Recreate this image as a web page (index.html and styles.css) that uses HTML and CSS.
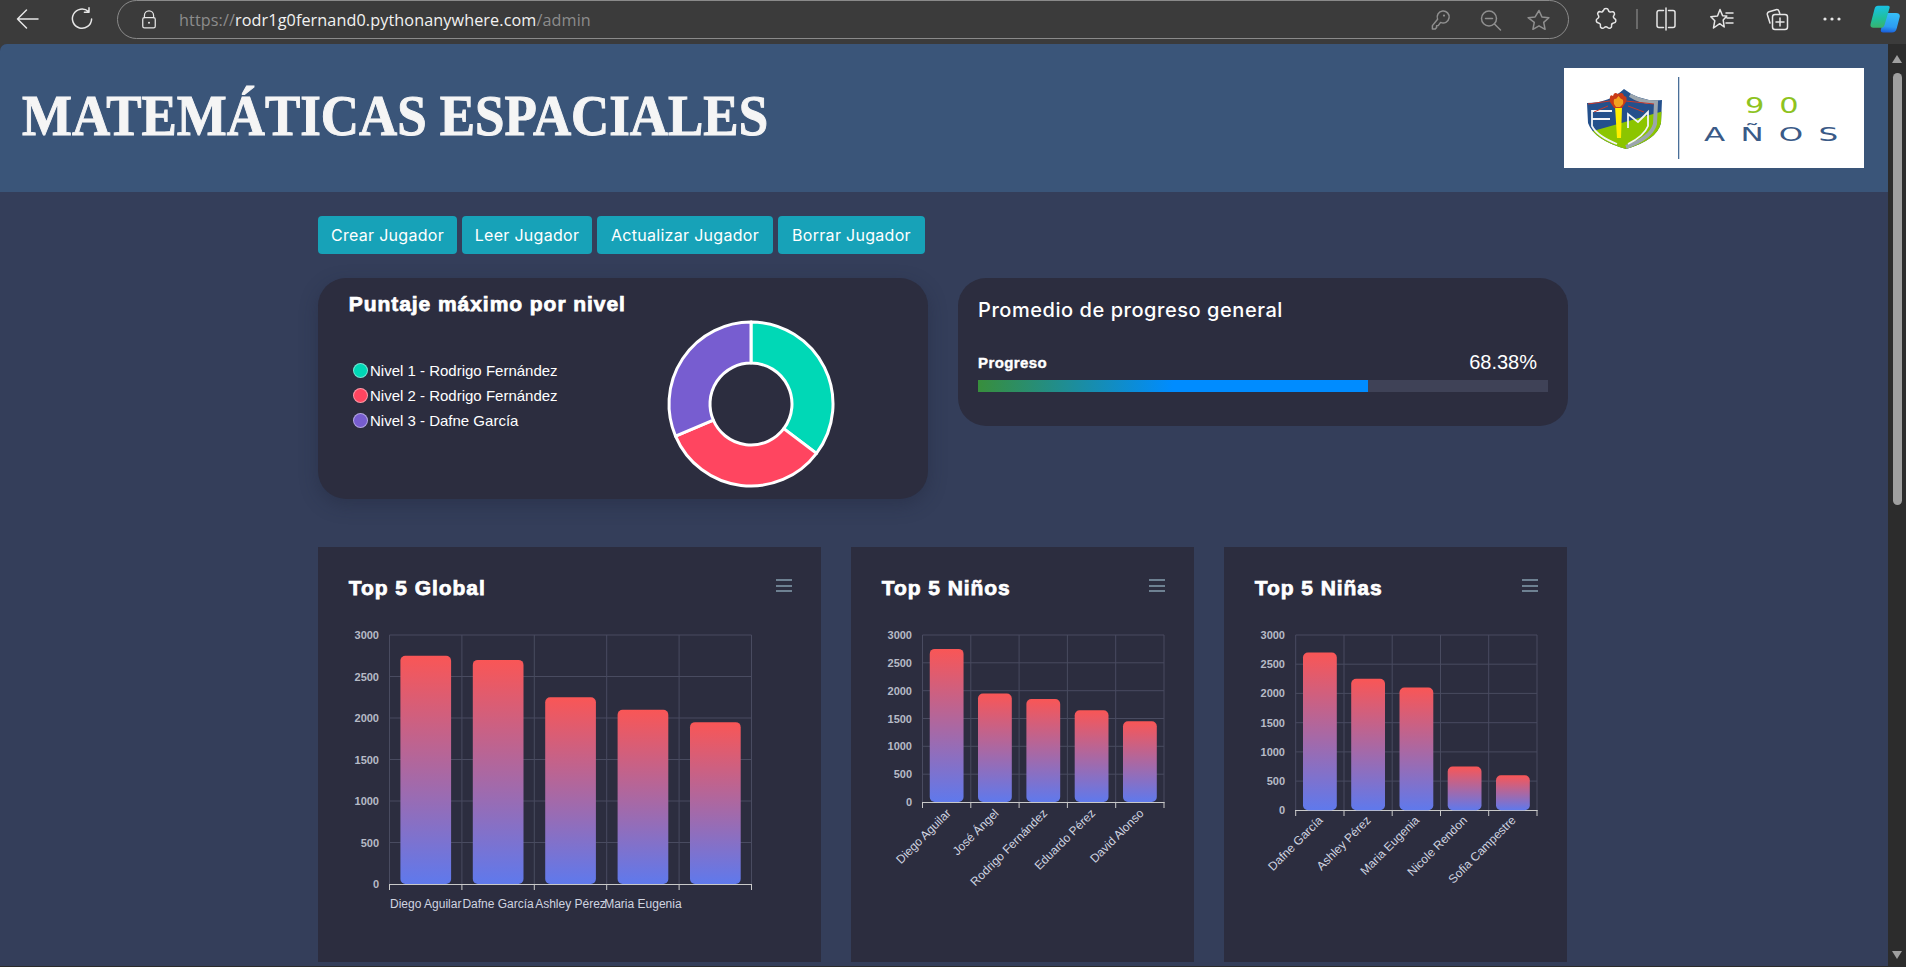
FILE: index.html
```html
<!DOCTYPE html>
<html lang="es">
<head>
<meta charset="utf-8">
<title>Matemáticas Espaciales</title>
<link rel="stylesheet" href="styles.css">
</head>
<body>
<div class="toolbar">
  <svg class="tb-icon back" viewBox="0 0 24 24"><path class="ic" d="M23 12H2.500M11.500 3 2.500 12l9 9"/></svg>
  <svg class="tb-icon reload" viewBox="0 0 24 24"><path class="ic" d="M18.500 4.600A9.600 9.600 0 1 0 21.600 12M19 .8v4.400h-4.600"/></svg>
  <div class="pill">
    <svg class="tb-icon lock" viewBox="0 0 24 24"><path class="ic" d="M6.500 9V6.500a5.500 5.500 0 0 1 11 0V9"/><rect class="ic" x="4.500" y="9" width="15" height="12.500" rx="2"/><circle class="dot" cx="12" cy="15.200" r="1.200"/></svg>
    <div class="url"><span class="url-dim">https://</span>rodr1g0fernand0.pythonanywhere.com<span class="url-dim">/admin</span></div>
    <div class="pill-actions">
      <svg class="tb-icon" viewBox="0 0 24 24"><path class="ic-dim" d="M9.600 11.200 4.400 17.600v3.400h2.800l1.400-1.600v-1.600l1.600-.2 2.400-3.200a6 6 0 1 0-3-3.200Z"/><circle class="dot-dim" cx="16" cy="7.600" r="1.100"/></svg>
      <svg class="tb-icon" viewBox="0 0 24 24"><circle class="ic-dim" cx="11" cy="10.500" r="7.500"/><path class="ic-dim" d="M7.500 10.500h7M16.500 16l6 6"/></svg>
      <svg class="tb-icon" viewBox="0 0 24 24"><path class="ic-dim" d="m12 2.500 2.900 6.400 7 .8-5.200 4.700 1.400 6.900-6.100-3.500-6.100 3.500 1.400-6.900L1.100 9.700l7-.8Z"/></svg>
    </div>
  </div>
  <svg class="tb-icon ext" viewBox="0 0 24 24"><path class="ic" d="M9.500 3.500a2.600 2.600 0 0 1 5 0c.3 1.400 1.600 1.900 2.800 1.400 2.600-1 4.200 1.600 2.600 3.600-.9 1-.6 2.400.6 3 2.300 1.100 1.600 4.300-.9 4.600-1.400.2-2.200 1.200-2 2.600.4 2.400-2.400 3.400-4 1.800-1-1-2.300-1-3.300 0-1.700 1.600-4.400.4-3.900-1.900.3-1.300-.5-2.400-1.900-2.600-2.500-.3-3.100-3.500-.8-4.600 1.200-.6 1.400-1.900.6-3-1.600-2 .1-4.500 2.500-3.500 1.200.5 2 0 2.300-1.400Z"/></svg>
  <div class="tb-sep"></div>
  <svg class="tb-icon split" viewBox="0 0 24 24"><path class="ic" d="M12 1v22M9.500 3.500H5a2 2 0 0 0-2 2v13a2 2 0 0 0 2 2h4.500M14.500 3.500H19a2 2 0 0 1 2 2v13a2 2 0 0 1-2 2h-4.500"/></svg>
  <svg class="tb-icon fav" viewBox="0 0 24 24"><path class="ic" d="m10 2.500 2.600 6.200 4.200.4-3.600 4 1 6.900-4.500-3.300-6.200 4.300 1.300-7.300L.8 9.700l6.700-.8ZM16 6h7M17 11h6M16 16h7"/></svg>
  <svg class="tb-icon coll" viewBox="0 0 24 24"><path class="ic" d="M5 16 2.400 7.800a2.500 2.500 0 0 1 1.700-3.100L11 2.700a2.500 2.500 0 0 1 3 1.500l.8 2.300"/><rect class="ic" x="7.500" y="7.500" width="15" height="15" rx="2.500"/><path class="ic" d="M15 11v8M11 15h8"/></svg>
  <svg class="tb-icon more" viewBox="0 0 24 24"><circle class="dot" cx="5" cy="12" r="1.600"/><circle class="dot" cx="12" cy="12" r="1.600"/><circle class="dot" cx="19" cy="12" r="1.600"/></svg>
  <svg class="copilot" viewBox="0 0 30 28">
    <defs>
      <linearGradient id="cpA" x1="0.3" y1="0" x2="0.4" y2="1"><stop offset="0" stop-color="#19c1e8"/><stop offset="0.6" stop-color="#1fbf9b"/><stop offset="1" stop-color="#3ab26c"/></linearGradient>
      <linearGradient id="cpB" x1="0.5" y1="0" x2="0.4" y2="1"><stop offset="0" stop-color="#36bdf7"/><stop offset="0.7" stop-color="#2c9cf0"/><stop offset="1" stop-color="#1a5fdc"/></linearGradient>
    </defs>
    <path fill="url(#cpB)" d="M17 8h9c3 0 4.300 1.700 3.700 4l-3 11.500c-.6 2.700-2.300 4-4.700 4h-9c-2 0-2.500-1.300-2-3.200l3.500-13.300c.5-2 1.500-3 2.500-3Z"/>
    <path fill="url(#cpA)" d="M8 .8h10c1.600 0 2 .9 1.500 2.500L14.500 20c-.6 2-2 2.800-3.800 2.800H3.500C1 22.800 0 21 .6 19L4.500 4C5 2 6.300.8 8 .8Z"/>
  </svg>
</div>

<div class="shell">
  <div class="page">
    <header class="site-header">
      <h1 class="site-title">MATEMÁTICAS ESPACIALES</h1>
      <svg class="logo" viewBox="0 0 300 100">
        <defs>
          <clipPath id="shieldClip"><path d="M23 35Q45 35 60 21Q76 34 98 32L97 55Q93 72 62 81Q30 72 24 55Z"/></clipPath>
        </defs>
        <rect width="300" height="100" fill="#fff"/>
        <g clip-path="url(#shieldClip)">
          <rect x="20" y="18" width="82" height="66" fill="#24508c"/>
          <path fill="#8cc500" d="M20 65.500 100 43V84H20Z"/>
          <path fill="none" stroke="#9ba5ad" stroke-width="4" d="M66 27Q78 35 92 34L91 56Q87 70 62 79"/>
        </g>
        <path fill="none" stroke="#f2f4f7" stroke-width="1.800" d="M48 43H28V58Q33 68 53 76M28 51H46M64 60V46L74 54 84 44V58Q80 68 64 76"/>
        <path fill="none" stroke="#c8392b" stroke-width="1" d="M24 36 46 33M44 38 30 44M62 33 90 36M64 38 80 44"/>
        <path fill="#ffee00" d="M51 38H58L57 70H53Z"/>
        <path fill="#c93a17" d="M46 34Q45 25 49 28 50 23 54 26 59 23 60 28 64 28 62 34L58 40H50Z"/>
        <path fill="#f4a21f" d="M50 36Q49 30 52 31L54.500 28 57 31Q60 31 59 36L56 39H52Z"/>
        <rect x="114" y="9" width="1.300" height="82" fill="#4a6f99"/>
        <text class="logo-90" transform="translate(181 45) scale(1.450 1)" textLength="37">90</text>
        <text class="logo-anos" transform="translate(140 73) scale(1.550 1)" textLength="86.500">AÑOS</text>
      </svg>
    </header>

    <main class="content">
      <nav class="actions">
        <a class="btn">Crear Jugador</a>
        <a class="btn">Leer Jugador</a>
        <a class="btn">Actualizar Jugador</a>
        <a class="btn">Borrar Jugador</a>
      </nav>

      <section class="summary">
        <article class="panel panel-donut">
          <h2 class="heavy-title">Puntaje máximo por nivel</h2>
          <div class="donut-row">
            <ul class="legend">
              <li class="legend-item"><span class="swatch swatch-a"></span>Nivel 1 - Rodrigo Fernández</li>
              <li class="legend-item"><span class="swatch swatch-b"></span>Nivel 2 - Rodrigo Fernández</li>
              <li class="legend-item"><span class="swatch swatch-c"></span>Nivel 3 - Dafne García</li>
            </ul>
            <svg class="donut" viewBox="-85 -85 170 170">
              <path class="seg seg-a" d="M0 -82A82 82 0 0 1 65.490 49.350L32.740 24.670A41 41 0 0 0 0 -41Z"/>
              <path class="seg seg-b" d="M65.490 49.350A82 82 0 0 1 -75.480 32.040L-37.740 16.020A41 41 0 0 0 32.740 24.670Z"/>
              <path class="seg seg-c" d="M-75.480 32.040A82 82 0 0 1 0 -82L0 -41A41 41 0 0 0 -37.740 16.020Z"/>
            </svg>
          </div>
        </article>
        <article class="panel panel-progress">
          <h2 class="plain-title">Promedio de progreso general</h2>
          <div class="progress-row"><span class="progress-label">Progreso</span><span class="progress-value">68.38%</span></div>
          <div class="track"><div class="fill"></div></div>
        </article>
      </section>

      <section class="charts">
        <article class="chart-card">
          <div class="chart-head"><h2 class="heavy-title">Top 5 Global</h2><div class="burger"><i></i><i></i><i></i></div></div>
          <svg class="chart" viewBox="318 601 503 361">
            <defs><linearGradient id="barFill" x1="0" y1="0" x2="0" y2="1"><stop offset="0" stop-color="#f95656"/><stop offset="1" stop-color="#5f79ec"/></linearGradient></defs>
            <path class="grid" d="M389.500 635H751.500M389.500 676.500H751.500M389.500 718H751.500M389.500 759.500H751.500M389.500 801H751.500M389.500 842.500H751.500M389.500 635V884M461.900 635V884M534.300 635V884M606.700 635V884M679.100 635V884M751.500 635V884"/>
            <path class="axis" d="M389 884.500H752M389.500 884V890M461.900 884V890M534.300 884V890M606.700 884V890M679.100 884V890M751.500 884V890"/>
            <rect class="bar" x="400.400" y="655.750" width="50.700" height="228.250" rx="5"/>
            <rect class="bar" x="472.800" y="659.900" width="50.700" height="224.100" rx="5"/>
            <rect class="bar" x="545.200" y="697.250" width="50.700" height="186.750" rx="5"/>
            <rect class="bar" x="617.600" y="709.700" width="50.700" height="174.300" rx="5"/>
            <rect class="bar" x="690" y="722.150" width="50.700" height="161.850" rx="5"/>
            <text class="y-label" x="379" y="639">3000</text><text class="y-label" x="379" y="680.500">2500</text><text class="y-label" x="379" y="722">2000</text><text class="y-label" x="379" y="763.500">1500</text><text class="y-label" x="379" y="805">1000</text><text class="y-label" x="379" y="846.500">500</text><text class="y-label" x="379" y="888">0</text>
            <text class="x-label center" x="425.700" y="908">Diego Aguilar</text><text class="x-label center" x="498.100" y="908">Dafne García</text><text class="x-label center" x="570.500" y="908">Ashley Pérez</text><text class="x-label center" x="642.900" y="908">Maria Eugenia</text>
          </svg>
        </article>

        <article class="chart-card">
          <div class="chart-head"><h2 class="heavy-title">Top 5 Niños</h2><div class="burger"><i></i><i></i><i></i></div></div>
          <svg class="chart" viewBox="851 601 343 361">
            <path class="grid" d="M922.500 635H1164M922.500 662.800H1164M922.500 690.700H1164M922.500 718.500H1164M922.500 746.300H1164M922.500 774.200H1164M922.500 635V802M970.800 635V802M1019.100 635V802M1067.400 635V802M1115.700 635V802M1164 635V802"/>
            <path class="axis" d="M922 802.500H1164.500M922.500 802V808M970.800 802V808M1019.100 802V808M1067.400 802V808M1115.700 802V808M1164 802V808"/>
            <rect class="bar" x="929.750" y="648.900" width="33.800" height="153.100" rx="5"/>
            <rect class="bar" x="978" y="693.500" width="33.800" height="108.500" rx="5"/>
            <rect class="bar" x="1026.400" y="699" width="33.800" height="103" rx="5"/>
            <rect class="bar" x="1074.700" y="710.200" width="33.800" height="91.800" rx="5"/>
            <rect class="bar" x="1123" y="721.300" width="33.800" height="80.700" rx="5"/>
            <text class="y-label" x="912" y="639">3000</text><text class="y-label" x="912" y="666.800">2500</text><text class="y-label" x="912" y="694.700">2000</text><text class="y-label" x="912" y="722.500">1500</text><text class="y-label" x="912" y="750.300">1000</text><text class="y-label" x="912" y="778.200">500</text><text class="y-label" x="912" y="806">0</text>
            <text class="x-label slant" transform="rotate(-45 951.500 814)" x="951.500" y="814">Diego Aguilar</text>
            <text class="x-label slant" transform="rotate(-45 999.500 814)" x="999.500" y="814">José Ángel</text>
            <text class="x-label slant" transform="rotate(-45 1048 814)" x="1048" y="814">Rodrigo Fernández</text>
            <text class="x-label slant" transform="rotate(-45 1096 814)" x="1096" y="814">Eduardo Pérez</text>
            <text class="x-label slant" transform="rotate(-45 1144.500 814)" x="1144.500" y="814">David Alonso</text>
          </svg>
        </article>

        <article class="chart-card">
          <div class="chart-head"><h2 class="heavy-title">Top 5 Niñas</h2><div class="burger"><i></i><i></i><i></i></div></div>
          <svg class="chart" viewBox="1224 601 343 361">
            <path class="grid" d="M1295.700 635H1537M1295.700 664.200H1537M1295.700 693.400H1537M1295.700 722.700H1537M1295.700 751.900H1537M1295.700 781.100H1537M1295.700 635V810M1344 635V810M1392.200 635V810M1440.500 635V810M1488.700 635V810M1537 635V810"/>
            <path class="axis" d="M1295 810.500H1537.500M1295.700 810V816M1344 810V816M1392.200 810V816M1440.500 810V816M1488.700 810V816M1537 810V816"/>
            <rect class="bar" x="1303" y="652.500" width="33.800" height="157.800" rx="5"/>
            <rect class="bar" x="1351.200" y="678.800" width="33.800" height="131.500" rx="5"/>
            <rect class="bar" x="1399.500" y="687.600" width="33.800" height="122.700" rx="5"/>
            <rect class="bar" x="1447.700" y="766.500" width="33.800" height="43.800" rx="5"/>
            <rect class="bar" x="1496" y="775.200" width="33.800" height="35.100" rx="5"/>
            <text class="y-label" x="1285" y="639">3000</text><text class="y-label" x="1285" y="668.200">2500</text><text class="y-label" x="1285" y="697.400">2000</text><text class="y-label" x="1285" y="726.700">1500</text><text class="y-label" x="1285" y="755.900">1000</text><text class="y-label" x="1285" y="785.100">500</text><text class="y-label" x="1285" y="814.300">0</text>
            <text class="x-label slant" transform="rotate(-45 1323.500 821)" x="1323.500" y="821">Dafne García</text>
            <text class="x-label slant" transform="rotate(-45 1371.500 821)" x="1371.500" y="821">Ashley Pérez</text>
            <text class="x-label slant" transform="rotate(-45 1420 821)" x="1420" y="821">Maria Eugenia</text>
            <text class="x-label slant" transform="rotate(-45 1468 821)" x="1468" y="821">Nicole Rendon</text>
            <text class="x-label slant" transform="rotate(-45 1516.500 821)" x="1516.500" y="821">Sofia Campestre</text>
          </svg>
        </article>
      </section>
    </main>
  </div>
  <div class="scrollbar">
    <div class="sb-up"></div>
    <div class="sb-thumb"></div>
    <div class="sb-down"></div>
  </div>
</div>
</body>
</html>
```

FILE: styles.css
```css
* { box-sizing: border-box; }
html, body { margin: 0; padding: 0; }
body {
  width: 1906px;
  height: 967px;
  overflow: hidden;
  background: #3b3b3b;
  font-family: "Liberation Sans", Arial, sans-serif;
  color: #fff;
}

/* browser toolbar */
.toolbar {
  height: 44px;
  display: flex;
  align-items: center;
  background: #3b3b3b;
}
.tb-icon { width: 24px; height: 24px; flex: none; display: block; }
.ic { fill: none; stroke: #e6e6e6; stroke-width: 1.5; stroke-linecap: round; stroke-linejoin: round; }
.ic-dim { fill: none; stroke: #8f8f8f; stroke-width: 1.5; stroke-linecap: round; stroke-linejoin: round; }
.dot { fill: #e6e6e6; }
.dot-dim { fill: #8f8f8f; }
.back { margin-left: 15px; margin-top: -7px; }
.reload { margin-left: 31px; margin-top: -6px; }
.pill {
  margin-left: 23px;
  width: 1452px;
  height: 39px;
  align-self: flex-start;
  border: 1.5px solid #8a8a8a;
  border-radius: 20px;
  display: flex;
  align-items: center;
  padding: 0 17px 0 21px;
}
.lock { width: 20px; height: 20px; margin-top: 1px; }
.url {
  margin-left: 20px;
  font-family: "Open Sans", sans-serif;
  font-size: 16.2px;
  letter-spacing: 0.1px;
  white-space: nowrap;
  color: #f2f2f2;
}
.url-dim { color: #8c8c8c; }
.pill-actions { margin-left: auto; display: flex; gap: 25.5px; }
.ext { margin-left: 25px; margin-top: -6px; }
.tb-sep { width: 2px; height: 20px; margin: -6px 0 0 18px; background: #6a6a6a; }
.split { margin-left: 16px; margin-top: -6px; }
.fav { margin-left: 32px; margin-top: -6px; }
.coll { margin-left: 31px; margin-top: -6px; }
.more { margin-left: 31px; margin-top: -6px; }
.copilot { width: 30px; height: 28px; flex: none; display: block; margin-left: 26px; margin-top: -7px; }

/* window */
.shell { display: flex; height: 923px; }
.page {
  width: 1888px;
  overflow: hidden;
  background: #343e5a;
  border-top-left-radius: 7px;
  border-bottom: 1px solid #2b2b2b;
}
.scrollbar {
  width: 18px;
  background: #2c2c2c;
  display: flex;
  flex-direction: column;
  align-items: center;
  padding: 11px 0 8px;
}
.sb-up, .sb-down { width: 0; height: 0; border-left: 5.5px solid transparent; border-right: 5.5px solid transparent; }
.sb-up { border-bottom: 8px solid #9f9f9f; }
.sb-down { border-top: 8px solid #9f9f9f; margin-top: auto; }
.sb-thumb { width: 9px; height: 432px; margin-top: 10px; border-radius: 5px; background: #9f9f9f; }

/* header */
.site-header {
  height: 148px;
  background: #3a5579;
  display: flex;
  align-items: center;
  justify-content: space-between;
  padding: 0 24px 0 22px;
}
.site-title {
  margin: 0 0 4px;
  font-family: "Liberation Serif", serif;
  font-weight: 700;
  font-size: 58px;
  line-height: 1;
  color: #f5f5f5;
  white-space: nowrap;
  -webkit-text-stroke: 1px #f5f5f5;
  transform: scaleX(0.912);
  transform-origin: left center;
}
.logo { width: 300px; height: 100px; flex: none; display: block; }
.logo-90 { font-family: "DejaVu Sans", sans-serif; font-size: 21px; fill: #8ec31f; }
.logo-anos { font-family: "DejaVu Sans", sans-serif; font-size: 20px; fill: #3a5a87; }

/* content */
.content { padding: 24px 320px 0 318px; }
.actions { display: grid; grid-template-columns: 139px 130px 176px 147px; gap: 5px; margin-bottom: 24px; }
.btn {
  height: 38px;
  display: flex;
  align-items: center;
  justify-content: center;
  background: #17a2b8;
  border-radius: 4px;
  font-family: "Inter", sans-serif;
  font-size: 16px;
  letter-spacing: 0.3px;
  color: #fff;
  white-space: nowrap;
}
.summary { display: flex; align-items: flex-start; gap: 30px; margin-bottom: 48px; }
.panel {
  width: 610px;
  background: #2c2d3f;
  border-radius: 28px;
}
.panel-donut { height: 221px; padding: 13px 0 0 30px; box-shadow: 0 6px 18px rgba(30, 35, 55, 0.35); }
.heavy-title {
  margin: 0;
  font-family: "Liberation Sans", Arial, sans-serif;
  font-weight: 700;
  font-size: 21px;
  line-height: 26px;
  letter-spacing: 0.95px;
  -webkit-text-stroke: 0.75px #fff;
  color: #fff;
  padding-left: 0.7px;
}
.donut-row { display: flex; align-items: flex-start; margin-top: 2px; }
.legend { list-style: none; margin: 39px 0 0 5px; padding: 0; width: 313px; }
.legend-item {
  display: flex;
  align-items: center;
  gap: 2px;
  height: 25px;
  font-size: 15px;
  color: #fff;
  white-space: nowrap;
}
.swatch { width: 15px; height: 15px; border-radius: 50%; border: 1px solid rgba(255, 255, 255, 0.45); flex: none; }
.swatch-a { background: #00d8b6; }
.swatch-b { background: #ff4560; }
.swatch-c { background: #775dd0; }
.donut { width: 170px; height: 170px; display: block; flex: none; }
.seg { stroke: #fff; stroke-width: 3; stroke-linejoin: round; }
.seg-a { fill: #00d8b6; }
.seg-b { fill: #ff4560; }
.seg-c { fill: #775dd0; }

.panel-progress { height: 148px; padding: 20px 20px 0; }
.plain-title {
  margin: 0;
  font-family: "Inter", sans-serif;
  font-weight: 500;
  font-size: 20px;
  line-height: 24px;
  letter-spacing: 0.55px;
  color: #fff;
}
.progress-row {
  display: flex;
  justify-content: space-between;
  align-items: center;
  height: 24px;
  margin: 28px 0 6px;
  padding-right: 11px;
}
.progress-label { font-weight: 700; font-size: 15px; -webkit-text-stroke: 0.4px #fff; letter-spacing: 0.4px; }
.progress-value { font-size: 20px; }
.track { height: 12px; background: #3f4257; }
.fill { width: 68.38%; height: 100%; background: linear-gradient(90deg, #388e3c 0%, #008cff 50%, #008cff 100%); }

/* charts */
.charts { display: grid; grid-template-columns: 503px 343px 343px; gap: 30px; }
.chart-card { height: 415px; background: #2c2d3f; padding-top: 28px; }
.chart-head { display: flex; justify-content: space-between; align-items: flex-start; height: 26px; padding: 0 29px 0 30px; }
.burger { display: flex; flex-direction: column; gap: 3.5px; margin-top: 4px; width: 16px; }
.burger i { display: block; height: 2px; background: #6e8192; }
.chart { display: block; width: 100%; height: 361px; }
.grid { fill: none; stroke: #494b60; stroke-width: 1; }
.axis { fill: none; stroke: #c9c9c9; stroke-width: 1; }
.bar { fill: url(#barFill); }
.y-label { font-family: "Liberation Sans", Arial, sans-serif; font-size: 11px; font-weight: 700; text-anchor: end; fill: #b6bac6; }
.x-label { font-family: "Liberation Sans", Arial, sans-serif; font-size: 12px; fill: #d0d4e0; }
.center { text-anchor: middle; }
.slant { text-anchor: end; }
```
